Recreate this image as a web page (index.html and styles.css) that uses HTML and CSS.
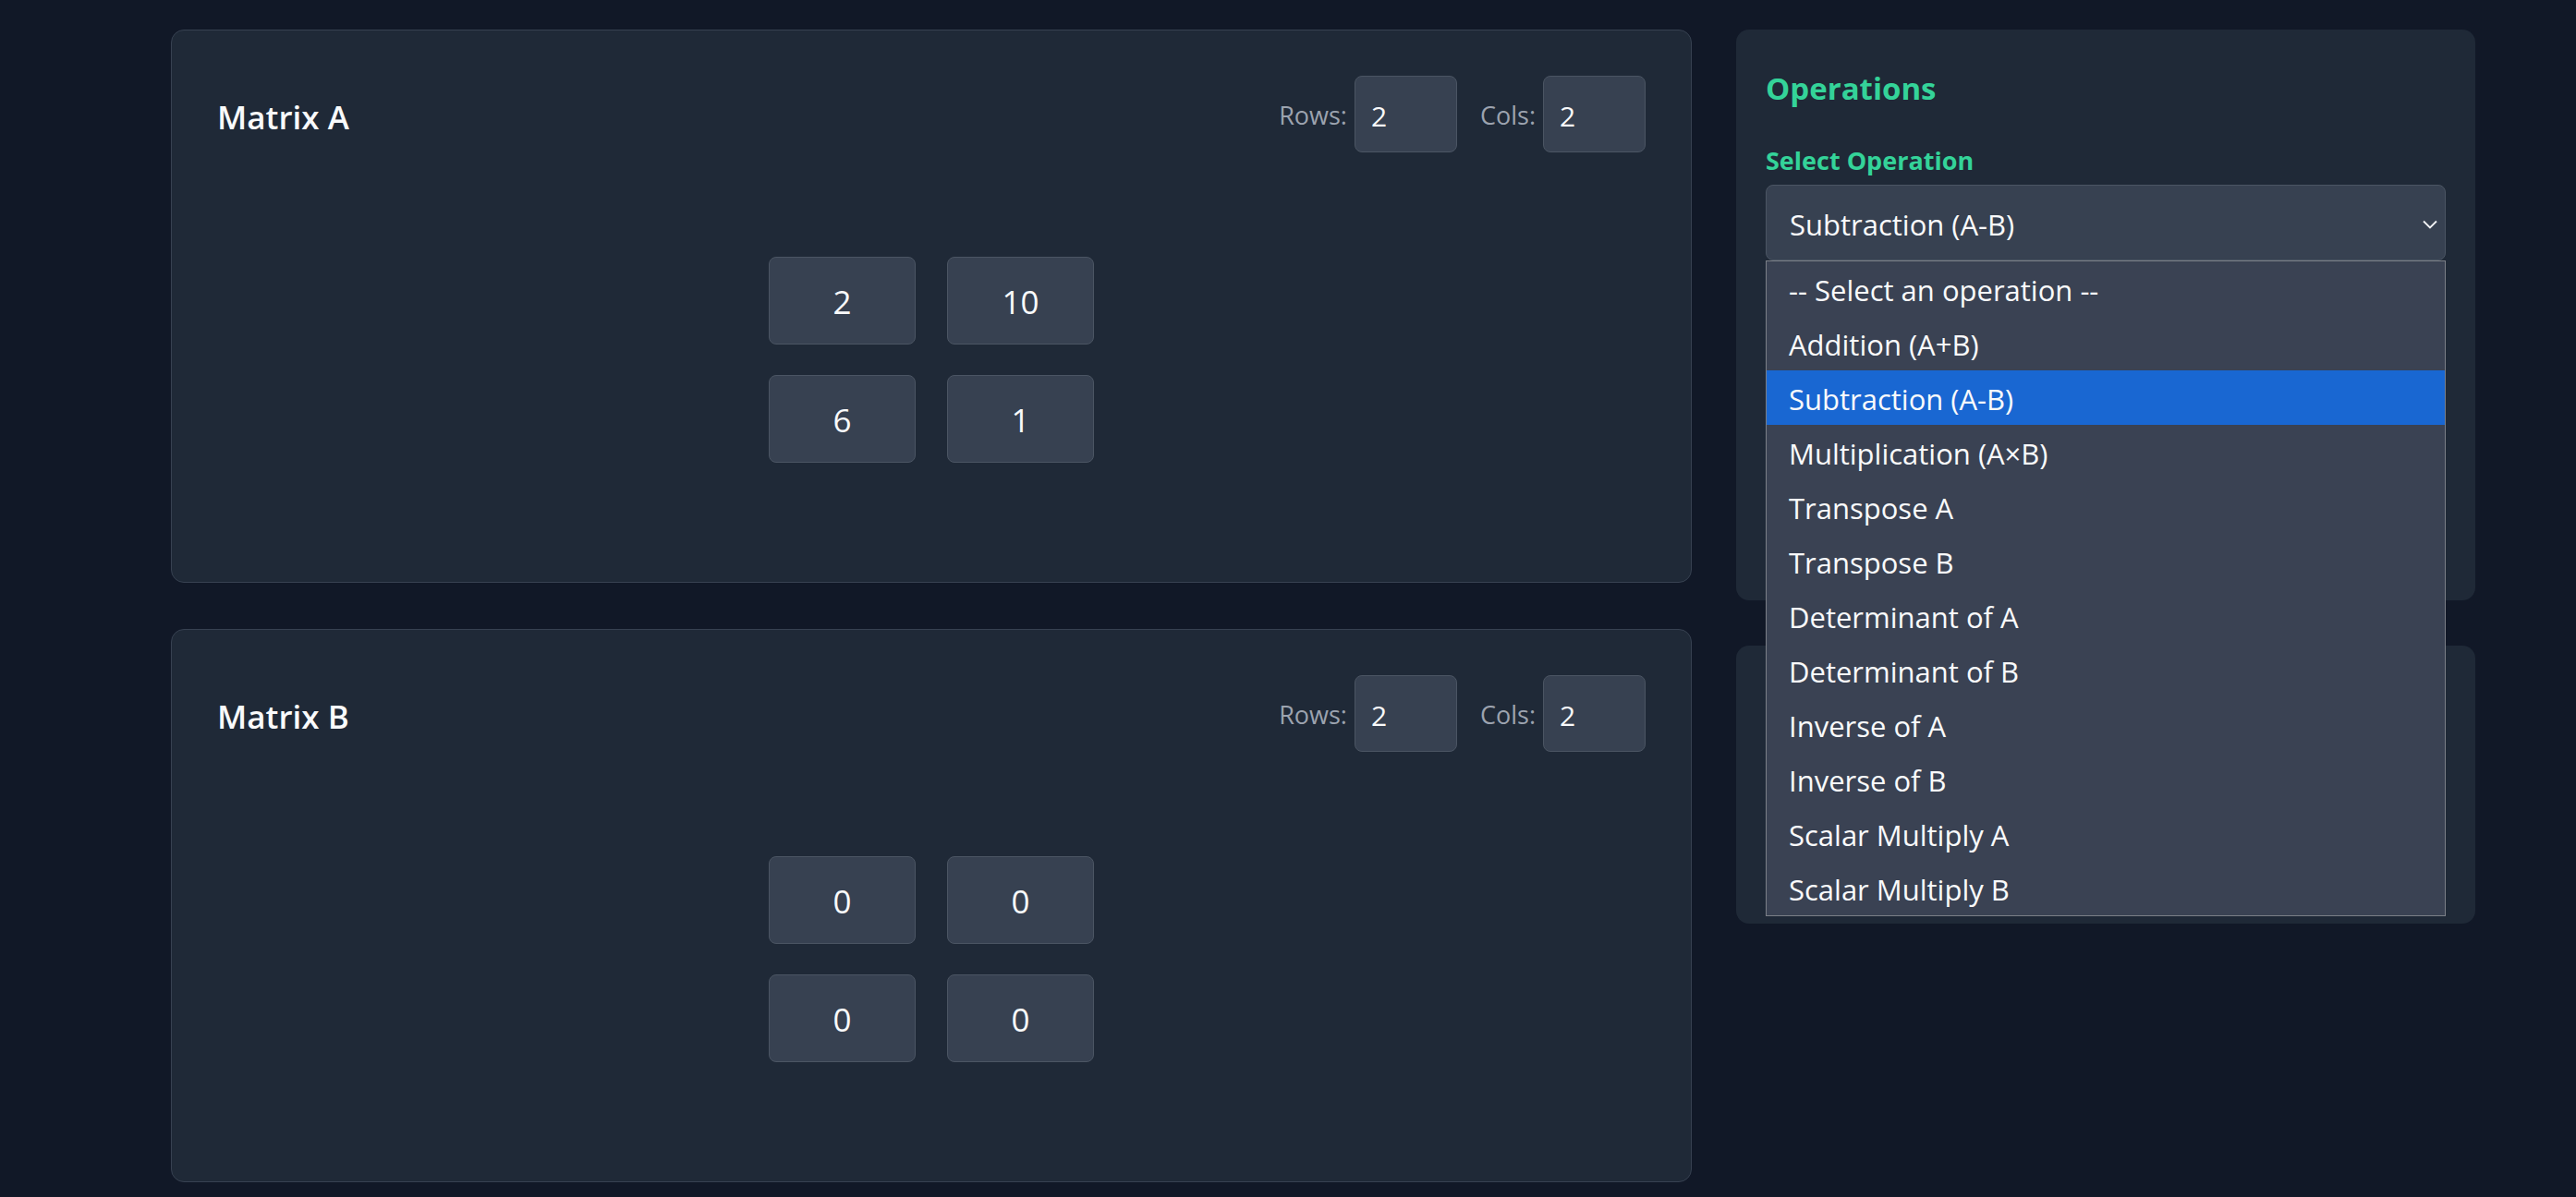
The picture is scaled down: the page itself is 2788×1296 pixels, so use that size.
FILE: index.html
```html
<!DOCTYPE html>
<html lang="en">
<head>
<meta charset="utf-8">
<title>Matrix Calculator</title>
<link rel="stylesheet" href="styles.css">
</head>
<body>
<div class="page">
  <div class="matrices">
    <section class="matrix-card">
      <div class="matrix-header">
        <h2 class="matrix-title">Matrix A</h2>
        <div class="dims">
          <label class="dim"><span class="dim-label">Rows:</span><input class="dim-input" type="text" value="2"></label>
          <label class="dim"><span class="dim-label">Cols:</span><input class="dim-input" type="text" value="2"></label>
        </div>
      </div>
      <div class="matrix-body">
        <div class="matrix-grid">
          <input class="cell" type="text" value="2">
          <input class="cell" type="text" value="10">
          <input class="cell" type="text" value="6">
          <input class="cell" type="text" value="1">
        </div>
      </div>
    </section>
    <section class="matrix-card">
      <div class="matrix-header">
        <h2 class="matrix-title">Matrix B</h2>
        <div class="dims">
          <label class="dim"><span class="dim-label">Rows:</span><input class="dim-input" type="text" value="2"></label>
          <label class="dim"><span class="dim-label">Cols:</span><input class="dim-input" type="text" value="2"></label>
        </div>
      </div>
      <div class="matrix-body">
        <div class="matrix-grid">
          <input class="cell" type="text" value="0">
          <input class="cell" type="text" value="0">
          <input class="cell" type="text" value="0">
          <input class="cell" type="text" value="0">
        </div>
      </div>
    </section>
  </div>
  <aside class="side">
    <section class="panel ops-panel">
      <h2 class="ops-title">Operations</h2>
      <div class="field-label">Select Operation</div>
      <div class="select-wrap">
        <div class="select-box">
          <span class="select-value">Subtraction (A-B)</span>
          <svg class="chevron" width="16" height="10" viewBox="0 0 16 10"><path d="M1 1.5 L8 8.5 L15 1.5" fill="none" stroke="#f3f4f6" stroke-width="1.8"/></svg>
        </div>
        <ul class="dropdown">
          <li class="option">-- Select an operation --</li>
          <li class="option">Addition (A+B)</li>
          <li class="option selected">Subtraction (A-B)</li>
          <li class="option">Multiplication (A×B)</li>
          <li class="option">Transpose A</li>
          <li class="option">Transpose B</li>
          <li class="option">Determinant of A</li>
          <li class="option">Determinant of B</li>
          <li class="option">Inverse of A</li>
          <li class="option">Inverse of B</li>
          <li class="option">Scalar Multiply A</li>
          <li class="option">Scalar Multiply B</li>
        </ul>
      </div>
      <div class="ops-rest"></div>
    </section>
    <section class="panel result-panel"></section>
  </aside>
</div>
</body>
</html>
```

FILE: styles.css
```css
* {
  box-sizing: border-box;
}

html, body {
  margin: 0;
  padding: 0;
  background: #111827;
}

body {
  font-family: "Open Sans", "Noto Sans", sans-serif;
  color: #f9fafb;
}

.page {
  display: flex;
  align-items: flex-start;
  gap: 48px;
  padding: 32px 0 0 185px;
}

.matrices {
  width: 1646px;
  display: flex;
  flex-direction: column;
  gap: 50px;
}

.matrix-card {
  background: #1f2937;
  border: 1px solid #374151;
  border-radius: 14px;
  padding: 49px;
}

.matrix-header {
  display: flex;
  align-items: center;
  justify-content: space-between;
  height: 83px;
}

.matrix-title {
  margin: 0;
  font-size: 35px;
  font-weight: 600;
  line-height: 1;
  color: #f9fafb;
  padding-top: 5px;
}

.dims {
  display: flex;
  align-items: center;
  gap: 25px;
}

.dim {
  display: flex;
  align-items: center;
  gap: 8px;
}

.dim-label {
  font-size: 27px;
  color: #9ca3af;
  padding-top: 2px;
}

.dim-input {
  width: 111px;
  height: 83px;
  background: #374151;
  border: 1px solid #4b5563;
  border-radius: 8px;
  color: #f9fafb;
  font-family: "Open Sans", "Noto Sans", sans-serif;
  font-size: 30px;
  padding: 3px 0 0 17px;
  outline: none;
}

.matrix-body {
  display: flex;
  justify-content: center;
  padding: 113px 0 80px;
}

.matrix-grid {
  display: grid;
  grid-template-columns: repeat(2, 159px);
  grid-auto-rows: 95px;
  gap: 33px 34px;
}

.cell {
  width: 159px;
  height: 95px;
  background: #374151;
  border: 1px solid #4b5563;
  border-radius: 8px;
  color: #f9fafb;
  font-family: "Open Sans", "Noto Sans", sans-serif;
  font-size: 35px;
  text-align: center;
  padding: 2px 0 0;
  outline: none;
}

.side {
  width: 800px;
  display: flex;
  flex-direction: column;
  gap: 49px;
}

.panel {
  background: #1f2937;
  border-radius: 14px;
  padding: 32px;
}

.ops-title {
  margin: 12px 0 0;
  font-size: 33px;
  font-weight: 700;
  line-height: 40px;
  color: #34d399;
}

.field-label {
  margin-top: 42px;
  font-size: 27px;
  font-weight: 700;
  line-height: 32px;
  color: #34d399;
}

.select-wrap {
  position: relative;
  margin-top: 10px;
}

.select-box {
  height: 82px;
  background: #374151;
  border: 1px solid #4b5563;
  border-radius: 8px;
  display: flex;
  align-items: center;
  justify-content: space-between;
  padding: 0 8px 0 25px;
}

.select-value {
  font-size: 31px;
  color: #f9fafb;
  padding-top: 3px;
}

.chevron {
  display: block;
  margin-top: 4px;
}

.dropdown {
  position: absolute;
  top: 100%;
  left: 0;
  right: 0;
  margin: 0;
  padding: 0;
  list-style: none;
  background: #3a4253;
  border: 1px solid #7b7f87;
  z-index: 10;
}

.option {
  height: 59px;
  display: flex;
  align-items: center;
  padding: 3px 0 0 24px;
  font-size: 31px;
  color: #f9fafb;
  white-space: nowrap;
}

.option.selected {
  background: #1967d2;
}

.ops-rest {
  height: 336px;
}

.result-panel {
  height: 301px;
}
```
